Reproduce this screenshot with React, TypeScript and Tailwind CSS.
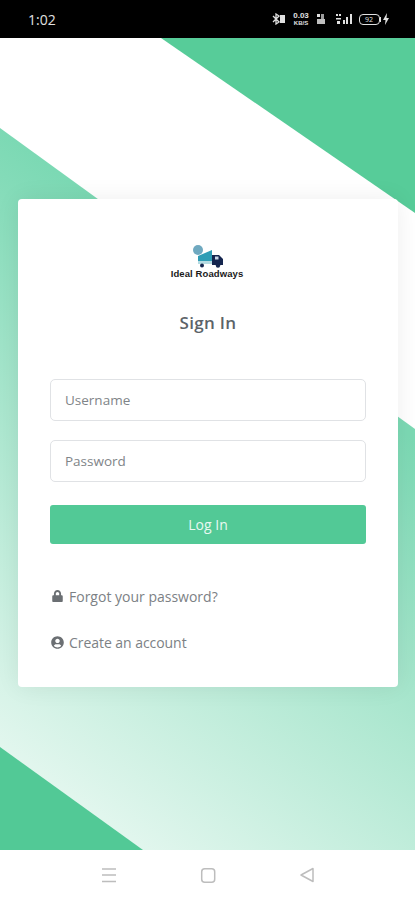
import { FaLock, FaUserCircle } from "react-icons/fa";

function StatusIcons() {
  return (
    <div className="flex items-center text-[#e0e0e0]">
      <svg width="14" height="12" viewBox="0 0 14 12" className="mr-[6px]" fill="none" stroke="currentColor">
        <path d="M1 3l6 6-3 2V1l3 2-6 6" strokeWidth="1.3" />
        <rect x="8" y="2" width="5" height="8" fill="currentColor" stroke="none" />
      </svg>
      <div className="mr-[5px] flex w-[19px] flex-col items-center font-['Liberation_Sans',sans-serif] font-bold">
        <span className="text-[8px] leading-[8px]">0.03</span>
        <span className="text-[6px] leading-[7px]">KB/S</span>
      </div>
      <svg width="10" height="12" viewBox="0 0 10 12" className="mr-[9px]" fill="currentColor">
        <rect x="1" y="1" width="3" height="3" />
        <rect x="5" y="1" width="3" height="5" opacity="0.7" />
        <rect x="1" y="6" width="8" height="5" opacity="0.85" />
      </svg>
      <svg width="18" height="12" viewBox="0 0 18 12" className="mr-[6px]" fill="currentColor">
        <rect x="1" y="1" width="2" height="2" />
        <rect x="4" y="1" width="2" height="2" />
        <rect x="1" y="5" width="5" height="1.5" />
        <rect x="2" y="8" width="3" height="3" />
        <rect x="8" y="7" width="2" height="4" />
        <rect x="11" y="4" width="2" height="7" />
        <rect x="15" y="1" width="2" height="10" />
      </svg>
      <div className="flex h-[11px] w-[21px] items-center justify-center rounded-[4px] border border-[#e0e0e0] text-[7px] leading-none">
        92
      </div>
      <div className="h-[5px] w-[1.5px] bg-[#e0e0e0]" />
      <svg width="8" height="12" viewBox="0 0 8 12" className="ml-[1px]" fill="currentColor">
        <path d="M5 0 1 7h2.5L3 12l4-7H4.5z" />
      </svg>
    </div>
  );
}

function Logo() {
  return (
    <div className="flex flex-col items-center pr-[2px]">
      <svg width="34" height="23" viewBox="0 0 34 23" className="ml-[4px]">
        <circle cx="6" cy="5" r="5" fill="#6fa9c0" />
        <path d="M6 11 20 5v14H6z" fill="#2f9db5" />
        <rect x="6" y="16" width="14" height="3" fill="#b5dbe2" />
        <path d="M20 10h7l4 4v6H20z" fill="#15264f" />
        <rect x="23" y="11.500" width="3.500" height="3" fill="#c8d6e8" />
        <circle cx="10" cy="20.500" r="2" fill="#15264f" />
        <circle cx="26" cy="20.500" r="2.200" fill="#15264f" />
      </svg>
      <span className="font-['Liberation_Sans',sans-serif] text-[9.5px] leading-[11px] font-bold tracking-[0.1px] text-[#1a1a1a]">
        Ideal Roadways
      </span>
    </div>
  );
}

export default function App() {
  return (
    <div className="flex h-[900px] w-[415px] flex-col overflow-hidden bg-white font-['Open_Sans',sans-serif]">
      <div className="flex h-[38px] shrink-0 items-center justify-between bg-black pr-[25px] pl-[28px]">
        <span className="text-[14px] text-[#e0e0e0]">1:02</span>
        <StatusIcons />
      </div>

      <main className="relative flex h-[812px] shrink-0 flex-col">
        {/* background shapes */}
        <svg width="415" height="812" viewBox="0 38 415 812" className="absolute inset-0">
          <defs>
            <linearGradient id="fade" gradientUnits="userSpaceOnUse" x1="0" y1="130" x2="-343" y2="587">
              <stop offset="0" stopColor="#7cd9b4" />
              <stop offset="1" stopColor="#f2fbf7" />
            </linearGradient>
          </defs>
          <polygon points="0,128 415,429 415,850 0,850" fill="url(#fade)" />
          <polygon points="161,38 415,213 415,38" fill="#57cc99" />
          <polygon points="0,747 143,850 0,850" fill="#52c996" />
        </svg>

        <div className="relative mt-[161px] ml-[18px] flex h-[488px] w-[380px] flex-col rounded-[4px] bg-white px-[32px] shadow-[0_0_24px_rgba(0,0,0,0.07)]">
          <div className="mt-[46px] flex justify-center">
            <Logo />
          </div>
          <h1 className="mt-[32px] text-center text-[17px] leading-[24px] font-semibold tracking-[0.3px] text-[#5c6368]">
            Sign In
          </h1>

          <input
            placeholder="Username"
            className="mt-[44px] h-[42px] w-full rounded-[5px] border-[1.5px] border-[#e0e2e5] bg-white px-[14px] text-[13.5px] outline-none placeholder:text-[#808488]"
          />
          <input
            placeholder="Password"
            className="mt-[19px] h-[42px] w-full rounded-[5px] border-[1.5px] border-[#e0e2e5] bg-white px-[14px] text-[13.5px] outline-none placeholder:text-[#808488]"
          />
          <button className="mt-[23px] h-[39px] w-full rounded-[3px] bg-[#52c996] text-[14px] text-[#e9f8f1]">
            Log In
          </button>

          <a className="mt-[42px] flex h-[20px] items-center gap-[6px] pl-[2px] text-[14px] text-[#7c8185]">
            <FaLock className="h-[12px] w-[11px] text-[#6b6f73]" />
            Forgot your password?
          </a>
          <a className="mt-[26px] flex h-[20px] items-center gap-[5px] pl-[1px] text-[14px] tracking-[-0.05px] text-[#7c8185]">
            <FaUserCircle className="h-[13px] w-[13px] text-[#6b6f73]" />
            Create an account
          </a>
        </div>
      </main>

      <div className="flex h-[50px] shrink-0 items-center bg-white">
        <svg width="415" height="50" viewBox="0 0 415 50" fill="none" stroke="#bdbdbd" strokeWidth="1.5">
          <path d="M102 19h14M102 25h14M102 31.500h14" />
          <rect x="201.700" y="18.700" width="13" height="13.500" rx="3" />
          <path d="M313 18.500v13l-12-6.500z" strokeLinejoin="round" />
        </svg>
      </div>
    </div>
  );
}
